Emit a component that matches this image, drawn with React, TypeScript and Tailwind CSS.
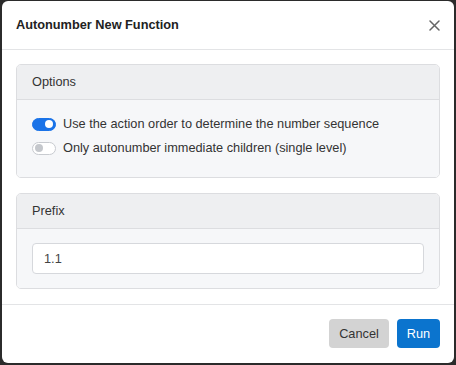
import { useState } from "react";

/* ---------------- SMALL PARTS ---------------- */

function Toggle({ on, onClick }: { on: boolean; onClick: () => void }) {
  return (
    <button
      onClick={onClick}
      className={
        on
          ? "relative w-[24px] h-[13px] rounded-full bg-[#1a73e8] border border-[#1a73e8] shrink-0"
          : "relative w-[24px] h-[13px] rounded-full bg-white border border-[#c8cbd0] shrink-0"
      }
    >
      <span
        className={
          on
            ? "absolute top-[1.5px] right-[2px] w-[8px] h-[8px] rounded-full bg-white"
            : "absolute top-[1.5px] left-[2px] w-[8px] h-[8px] rounded-full bg-[#c4c7cc]"
        }
      />
    </button>
  );
}

function Card({
  title,
  bodyClass,
  children,
}: {
  title: string;
  bodyClass: string;
  children: React.ReactNode;
}) {
  return (
    <div className="rounded-[5px] border border-[#dcdde0] overflow-hidden">
      <div className="h-[35px] px-[15px] flex items-center bg-[#eeeff1] border-b border-[#dcdde0] text-[12.75px] text-[#333]">
        {title}
      </div>
      <div className={"bg-[#f6f7f9] " + bodyClass}>{children}</div>
    </div>
  );
}

/* ---------------- MAIN ---------------- */

export default function App() {
  const [ordered, setOrdered] = useState(true);
  const [single, setSingle] = useState(false);
  const [prefix, setPrefix] = useState("1.1");

  return (
    <div
      className="w-[456px] h-[365px] bg-[#2b2b2b] pt-[1px] pl-[2px] overflow-hidden"
      style={{ fontFamily: '"Liberation Sans", Arial, sans-serif' }}
    >
      <div className="w-[452px] h-[362px] bg-white rounded-[6px] flex flex-col">
        {/* ---------- HEADER ---------- */}
        <div className="h-[49px] px-[14px] flex items-center justify-between border-b border-[#e3e4e6]">
          <h1 className="text-[12.75px] font-bold text-[#222]">
            Autonumber New Function
          </h1>
          <button className="w-[11px] h-[11px] flex items-center justify-center">
            <svg width="11" height="11" viewBox="0 0 11 11">
              <path
                d="M1 1 L10 10 M10 1 L1 10"
                stroke="#666"
                strokeWidth="1.5"
                strokeLinecap="round"
              />
            </svg>
          </button>
        </div>

        {/* ---------- BODY ---------- */}
        <div className="px-[14px] pt-[14px] pb-[15px] flex flex-col gap-[15px] border-b border-[#e3e4e6]">
          <Card title="Options" bodyClass="px-[15px] pt-[12px] pb-[17px]">
            <label className="h-[24px] flex items-center gap-[7px] text-[12.75px] text-[#333]">
              <Toggle on={ordered} onClick={() => setOrdered(!ordered)} />
              Use the action order to determine the number sequence
            </label>
            <label className="h-[24px] flex items-center gap-[7px] text-[12.75px] text-[#333]">
              <Toggle on={single} onClick={() => setSingle(!single)} />
              Only autonumber immediate children (single level)
            </label>
          </Card>

          <Card title="Prefix" bodyClass="px-[15px] py-[14px]">
            <input
              value={prefix}
              onChange={(e) => setPrefix(e.target.value)}
              className="w-full h-[31px] px-[11px] rounded-[4px] border border-[#d6d8dc] bg-white text-[12.75px] text-[#444] outline-none"
            />
          </Card>
        </div>

        {/* ---------- FOOTER ---------- */}
        <div className="flex justify-end gap-[8px] px-[14px] pt-[14px]">
          <button className="h-[29px] w-[60px] rounded-[4px] bg-[#d3d3d3] text-[12.75px] text-[#333]">
            Cancel
          </button>
          <button className="h-[29px] w-[43px] rounded-[4px] bg-[#0b74ce] text-[12.75px] text-white">
            Run
          </button>
        </div>
      </div>
    </div>
  );
}
